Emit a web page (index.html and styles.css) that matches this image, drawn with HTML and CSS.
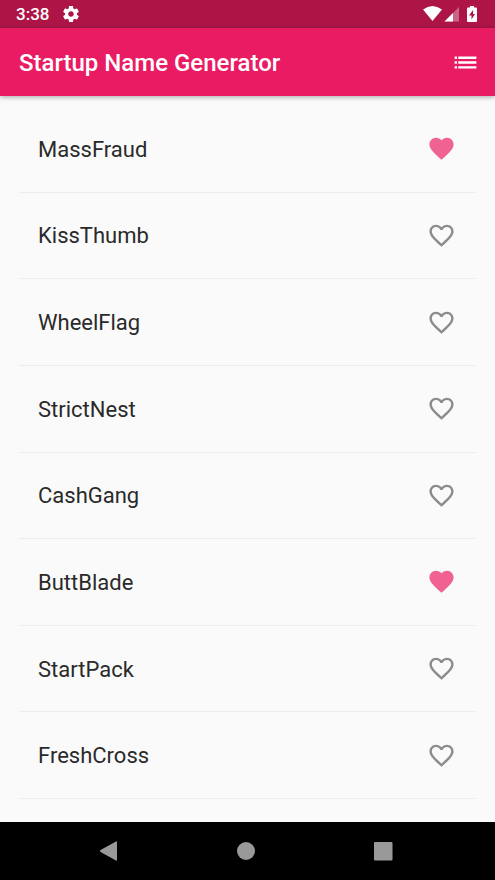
FILE: index.html
```html
<!DOCTYPE html>
<html lang="en">
<head>
<meta charset="utf-8">
<meta name="viewport" content="width=device-width, initial-scale=1">
<title>Startup Name Generator</title>
<link rel="stylesheet" href="styles.css">
</head>
<body>
<svg class="defs" aria-hidden="true">
  <symbol id="heart" viewBox="0 0 24 24"><path d="M12 21.35l-1.45-1.32C5.4 15.36 2 12.28 2 8.5 2 5.42 4.42 3 7.5 3c1.74 0 3.41.81 4.5 2.09C13.09 3.81 14.76 3 16.5 3 19.58 3 22 5.42 22 8.5c0 3.78-3.4 6.86-8.55 11.54L12 21.35z"/></symbol>
  <symbol id="heart-outline" viewBox="0 0 24 24"><path d="M16.5 3c-1.74 0-3.41.81-4.5 2.09C10.91 3.81 9.24 3 7.5 3 4.42 3 2 5.42 2 8.5c0 3.78 3.4 6.86 8.55 11.54L12 21.35l1.45-1.32C18.6 15.36 22 12.28 22 8.5 22 5.42 19.58 3 16.5 3zm-4.4 15.55l-.1.1-.1-.1C7.14 14.24 4 11.39 4 8.5 4 6.5 5.5 5 7.5 5c1.54 0 3.04.99 3.57 2.36h1.87C13.46 5.99 14.96 5 16.5 5c2 0 3.5 1.5 3.5 3.5 0 2.89-3.14 5.74-7.9 10.05z"/></symbol>
</svg>
<div class="screen">
  <div class="status-bar">
    <span class="clock">3:38</span>
    <svg class="status-gear" viewBox="2 2 20 20" aria-hidden="true"><path d="M19.43 12.98c.04-.32.07-.64.07-.98s-.03-.66-.07-.98l2.11-1.65c.19-.15.24-.42.12-.64l-2-3.46c-.12-.22-.39-.3-.61-.22l-2.49 1c-.52-.4-1.08-.73-1.69-.98l-.38-2.65C14.46 2.18 14.25 2 14 2h-4c-.25 0-.46.18-.49.42l-.38 2.65c-.61.25-1.17.59-1.69.98l-2.49-1c-.23-.09-.49 0-.61.22l-2 3.46c-.13.22-.07.49.12.64l2.11 1.65c-.04.32-.07.65-.07.98s.03.66.07.98l-2.11 1.65c-.19.15-.24.42-.12.64l2 3.46c.12.22.39.3.61.22l2.49-1c.52.4 1.08.73 1.69.98l.38 2.65c.03.24.24.42.49.42h4c.25 0 .46-.18.49-.42l.38-2.65c.61-.25 1.17-.59 1.69-.98l2.49 1c.23.09.49 0 .61-.22l2-3.46c.12-.22.07-.49-.12-.64l-2.11-1.65zM12 15.5c-1.93 0-3.5-1.57-3.5-3.5s1.57-3.5 3.5-3.5 3.5 1.57 3.5 3.5-1.57 3.5-3.5 3.5z"/></svg>
    <svg class="status-icons" viewBox="0 0 56 18" aria-hidden="true">
      <path d="M0 4.5Q9.500-2.500 19 4.500L9.500 16z"/>
      <path d="M36 2v14.500H21.500z" opacity=".35"/>
      <path d="M30 8v8.500h-8.500z"/>
      <path fill-rule="evenodd" d="M47 1h4v1.500h2q1 0 1 1V16q0 1-1 1h-8q-1 0-1-1V3.500q0-1 1-1h2zM50 5l-4 5.500h2.500v4l3.500-5.500h-2z"/>
    </svg>
  </div>
  <header class="app-bar">
    <h1>Startup Name Generator</h1>
    <button class="icon-button" type="button" aria-label="Saved suggestions">
      <svg class="icon" viewBox="0 0 24 24" aria-hidden="true"><path d="M3 13h2v-2H3v2zm0 4h2v-2H3v2zm0-8h2V7H3v2zm3 4h15v-2H6v2zm0 4h15v-2H6v2zM6 7v2h15V7H6z"/></svg>
    </button>
  </header>
  <main class="content">
    <ul class="names">
      <li class="name"><span class="label">MassFraud</span><button class="icon-button saved" type="button" aria-label="Remove MassFraud"><svg class="icon"><use href="#heart"/></svg></button></li>
      <li class="name"><span class="label">KissThumb</span><button class="icon-button" type="button" aria-label="Save KissThumb"><svg class="icon"><use href="#heart-outline"/></svg></button></li>
      <li class="name"><span class="label">WheelFlag</span><button class="icon-button" type="button" aria-label="Save WheelFlag"><svg class="icon"><use href="#heart-outline"/></svg></button></li>
      <li class="name"><span class="label">StrictNest</span><button class="icon-button" type="button" aria-label="Save StrictNest"><svg class="icon"><use href="#heart-outline"/></svg></button></li>
      <li class="name"><span class="label">CashGang</span><button class="icon-button" type="button" aria-label="Save CashGang"><svg class="icon"><use href="#heart-outline"/></svg></button></li>
      <li class="name"><span class="label">ButtBlade</span><button class="icon-button saved" type="button" aria-label="Remove ButtBlade"><svg class="icon"><use href="#heart"/></svg></button></li>
      <li class="name"><span class="label">StartPack</span><button class="icon-button" type="button" aria-label="Save StartPack"><svg class="icon"><use href="#heart-outline"/></svg></button></li>
      <li class="name"><span class="label">FreshCross</span><button class="icon-button" type="button" aria-label="Save FreshCross"><svg class="icon"><use href="#heart-outline"/></svg></button></li>
    </ul>
  </main>
  <nav class="nav-bar" aria-label="System">
    <button class="nav-button" type="button" aria-label="Back"><svg class="nav-icon" viewBox="0 0 20 20"><path d="M18 1v18q0 1-1 .500L1.500 11q-1-1 0-2L17 .500q1-.500 1 .500z"/></svg></button>
    <button class="nav-button" type="button" aria-label="Home"><svg class="nav-icon" viewBox="0 0 20 20"><circle cx="10" cy="10" r="9"/></svg></button>
    <button class="nav-button" type="button" aria-label="Overview"><svg class="nav-icon" viewBox="0 0 20 20"><rect x="1" y="1" width="18.500" height="18.500" rx="1"/></svg></button>
  </nav>
</div>
</body>
</html>
```
FILE: styles.css
```css
* {
  box-sizing: border-box;
}

body {
  margin: 0;
  background: #fafafa;
  color: #2a2a2a;
  font-family: Roboto, "Liberation Sans", sans-serif;
}

svg {
  display: block;
  fill: currentColor;
}

.defs {
  display: none;
}

.screen {
  display: flex;
  flex-direction: column;
  min-height: 100vh;
}

.status-bar {
  display: flex;
  align-items: center;
  height: 28px;
  padding: 0 16px;
  background: #ad1547;
  color: #fff;
}

.clock {
  font-size: 17px;
  font-weight: 500;
  line-height: 28px;
}

.status-gear {
  width: 16px;
  height: 16px;
  margin-left: 14px;
}

.status-icons {
  width: 56px;
  height: 18px;
  margin-left: auto;
}

.app-bar {
  display: flex;
  align-items: center;
  justify-content: space-between;
  height: 68px;
  padding: 0 15px 0 19px;
  background: #e91c63;
  color: #fff;
  box-shadow: 0 1px 5px rgba(0, 0, 0, 0.35);
}

h1 {
  margin: 0;
  padding-top: 2px;
  font-size: 24px;
  font-weight: 500;
  line-height: 28px;
}

.icon-button,
.nav-button {
  padding: 0;
  border: 0;
  background: none;
  color: inherit;
  cursor: pointer;
}

.icon {
  width: 29px;
  height: 29px;
}

.content {
  display: flex;
  flex: 1;
  padding: 10px 19px 23px;
}

.names {
  display: grid;
  flex: 1;
  grid-auto-rows: 1fr;
  margin: 0;
  padding: 0;
  list-style: none;
}

.name {
  display: flex;
  align-items: center;
  justify-content: space-between;
  padding: 0 20px 0 19px;
  border-bottom: 1px solid #ececec;
}

.label {
  padding-top: 2px;
  font-size: 22px;
  line-height: 28px;
}

.name .icon-button {
  color: #8c8c8c;
}

.name .saved {
  color: #f06292;
}

.nav-bar {
  display: flex;
  align-items: center;
  justify-content: center;
  gap: 117px;
  height: 58px;
  padding: 0 3px 1px 0;
  background: #000;
  color: #999;
}

.nav-icon {
  width: 20px;
  height: 20px;
}
```
